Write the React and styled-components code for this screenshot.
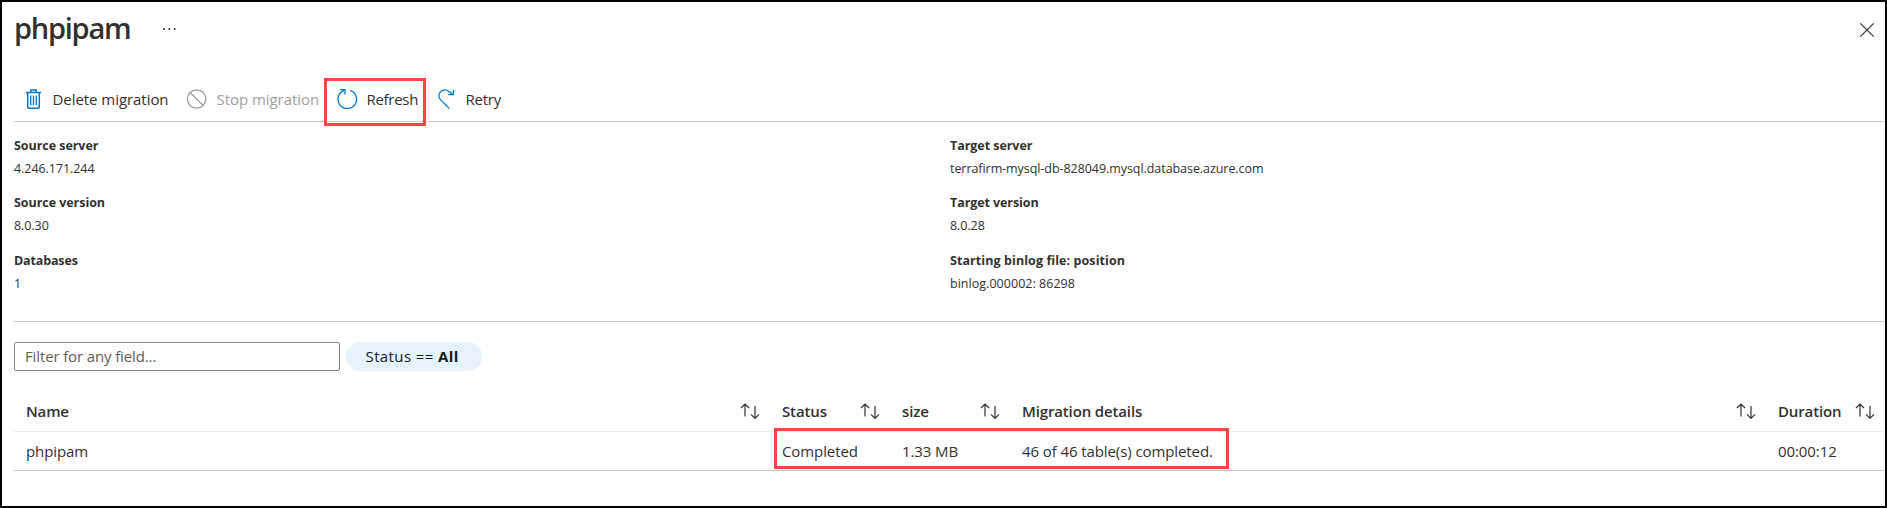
import React from 'react';
import styled, { createGlobalStyle } from 'styled-components';

const GlobalStyle = createGlobalStyle`
  *, *::before, *::after { box-sizing: border-box; }
  body {
    margin: 0;
    background: #fff;
    color: #323130;
    font: 400 15px/20px 'Open Sans', 'Noto Sans', sans-serif;
  }
`;

const Blade = styled.main`
  position: relative;
  width: 1887px;
  height: 508px;
  border: 2px solid #000;
  padding-left: 12px;
  background: #fff;
  white-space: nowrap;
  overflow: hidden;
`;

const Header = styled.header`
  display: flex;
  align-items: center;
  height: 50px;
  margin-bottom: 26px;
  padding-right: 10px;
`;

const Title = styled.h1`
  margin: 0;
  padding-top: 1px;
  font-size: 29px;
  line-height: 49px;
  font-weight: 600;
  letter-spacing: -1.25px;
`;

const IconButton = styled.button`
  display: flex;
  padding: 0;
  border: 0;
  background: none;
  color: #323130;
`;

const MoreButton = styled(IconButton)`
  margin: 4px auto 0 32px;
`;

const CloseButton = styled(IconButton)`
  margin-top: 5px;
`;

const Toolbar = styled.nav`
  display: flex;
  align-items: center;
  gap: 18px;
  height: 44px;
  padding-left: 10px;
  border-bottom: 1px solid #d2d0ce;
`;

const Command = styled.button`
  display: flex;
  align-items: flex-start;
  gap: 8.5px;
  width: ${(p) => p.$width}px;
  padding: 0;
  border: 0;
  background: none;
  font: inherit;
  line-height: 22px;
  letter-spacing: ${(p) => p.$track || '-0.05px'};
  white-space: nowrap;
  color: ${(p) => (p.disabled ? '#a19f9d' : '#323130')};

  svg {
    flex: none;
    color: ${(p) => (p.disabled ? '#a19f9d' : '#0078d4')};
  }
`;

const Essentials = styled.dl`
  display: grid;
  grid-template-columns: 936px 1fr;
  grid-auto-rows: 46px;
  row-gap: 11.5px;
  height: 200px;
  margin: 0;
  padding-top: 11.5px;
  border-bottom: 1px solid #c8c6c4;
  font-size: 12.5px;
  line-height: 23px;
`;

const Property = styled.div``;

const PropertyLabel = styled.dt`
  font-weight: 700;
  letter-spacing: ${(p) => p.$track || '-0.05px'};
`;

const PropertyValue = styled.dd`
  margin: 0;
  letter-spacing: ${(p) => p.$track || '-0.06px'};
`;

const FilterBar = styled.div`
  display: flex;
  gap: 6px;
  margin: 20px 0;
`;

const FilterInput = styled.input`
  width: 326px;
  height: 29px;
  padding: 0 10px 1px;
  border: 1px solid #8a8886;
  border-radius: 2px;
  font: inherit;
  letter-spacing: -0.13px;
  color: #323130;

  &::placeholder {
    color: #605e5c;
    opacity: 1;
  }
`;

const FilterPill = styled.button`
  width: 136px;
  height: 29px;
  padding: 0 0 0 19.5px;
  border: 0;
  border-radius: 15px;
  background: #e5f1fb;
  font: inherit;
  line-height: 29px;
  letter-spacing: 0.4px;
  text-align: left;
  white-space: pre;
  color: #1b1a19;
`;

const Row = styled.div`
  display: grid;
  grid-template-columns: 756px 120px 120px 756px 119px;
  height: ${(p) => (p.$head ? 41 : 39)}px;
  border-bottom: 1px solid ${(p) => (p.$head ? '#edebe9' : '#c8c6c4')};
  font-weight: ${(p) => (p.$head ? 600 : 400)};
  letter-spacing: ${(p) => (p.$head ? '-0.14px' : '-0.09px')};
`;

const Cell = styled.div`
  display: flex;
  align-items: center;
  justify-content: space-between;
  padding: 0 10px 0 12px;
`;

const Callout = styled.div`
  position: absolute;
  left: ${(p) => p.$x}px;
  top: ${(p) => p.$y}px;
  width: ${(p) => p.$w}px;
  height: ${(p) => p.$h}px;
  border: 3px solid #fc4444;
  pointer-events: none;
`;

const Glyph = ({ w, h = 23, stroke = 1.3, children }) => (
  <svg width={w} height={h} viewBox={`0 0 ${w} ${h}`} fill="none" stroke="currentColor" strokeWidth={stroke}>
    {children}
  </svg>
);

const DeleteIcon = () => (
  <Glyph w={20}>
    <path d="M2 4.5H17M6.8 4V1.9H12.2V4M3.7 5V18.9Q3.7 20.3 5 20.3H14Q15.3 20.3 15.3 18.9V5" strokeWidth="1.5" />
    <path d="M6.7 7.5V17.3M9.5 7.5V17.3M12.3 7.5V17.3" />
  </Glyph>
);

const StopIcon = () => (
  <Glyph w={22}>
    <circle cx="10.6" cy="11" r="9.2" />
    <path d="M4.1 4.5L17.1 17.5" />
  </Glyph>
);

const RefreshIcon = () => (
  <Glyph w={21}>
    <path d="M13.1 2.3A9.3 9.3 0 1 1 7.2 2.4" />
    <path d="M3.2 1.7H8V6.5" />
  </Glyph>
);

const RetryIcon = () => (
  <Glyph w={21}>
    <path d="M13.4 20.6L4.7 11.9A5.8 5.8 0 0 1 12.9 3.5L17 6.4" />
    <path d="M17.4 1.9V6.7H12.2" />
  </Glyph>
);

const SortIcon = () => (
  <Glyph w={20} h={16} stroke={1.2}>
    <path d="M5 13.5V1.2M1 5L5 1L9 5M15 3V15.2M11 11.3L15 15.3L19 11.3" />
  </Glyph>
);

const columns = ['Name', 'Status', 'size', 'Migration details', 'Duration'];
const migration = ['phpipam', 'Completed', '1.33 MB', '46 of 46 table(s) completed.', '00:00:12'];

const properties = [
  { label: 'Source server', value: '4.246.171.244' },
  { label: 'Target server', value: 'terrafirm-mysql-db-828049.mysql.database.azure.com' },
  { label: 'Source version', value: '8.0.30' },
  { label: 'Target version', value: '8.0.28', track: '-0.08px' },
  { label: 'Databases', value: '1', track: '-0.15px' },
  { label: 'Starting binlog file: position', value: 'binlog.000002: 86298', track: '0.08px', valueTrack: '0.03px' },
];

export default function App() {
  return (
    <>
      <GlobalStyle />
      <Blade>
        <Header>
          <Title>phpipam</Title>
          <MoreButton aria-label="More">
            <svg width="15" height="4" fill="currentColor">
              <circle cx="2" cy="2" r="1" />
              <circle cx="7.3" cy="2" r="1" />
              <circle cx="12.6" cy="2" r="1" />
            </svg>
          </MoreButton>
          <CloseButton aria-label="Close">
            <Glyph w={16} h={16} stroke={1.2}>
              <path d="M1.3 1.3L14.7 14.7M14.7 1.3L1.3 14.7" />
            </Glyph>
          </CloseButton>
        </Header>

        <Toolbar>
          <Command $width={144}><DeleteIcon />Delete migration</Command>
          <Command $width={133} disabled><StopIcon />Stop migration</Command>
          <Command $width={81} $track="-0.3px"><RefreshIcon />Refresh</Command>
          <Command $width={65} $track="-0.25px"><RetryIcon />Retry</Command>
        </Toolbar>

        <Essentials>
          {properties.map((p) => (
            <Property key={p.label}>
              <PropertyLabel $track={p.track}>{p.label}</PropertyLabel>
              <PropertyValue $track={p.valueTrack}>{p.value}</PropertyValue>
            </Property>
          ))}
        </Essentials>

        <FilterBar>
          <FilterInput placeholder="Filter for any field..." />
          <FilterPill>Status == <b>All</b></FilterPill>
        </FilterBar>

        <Row $head>
          {columns.map((name) => (
            <Cell key={name}>{name}<SortIcon /></Cell>
          ))}
        </Row>
        <Row>
          {migration.map((value) => (
            <Cell key={value}>{value}</Cell>
          ))}
        </Row>

        <Callout $x={322} $y={76} $w={102} $h={48} />
        <Callout $x={772} $y={426} $w={455} $h={41} />
      </Blade>
    </>
  );
}
